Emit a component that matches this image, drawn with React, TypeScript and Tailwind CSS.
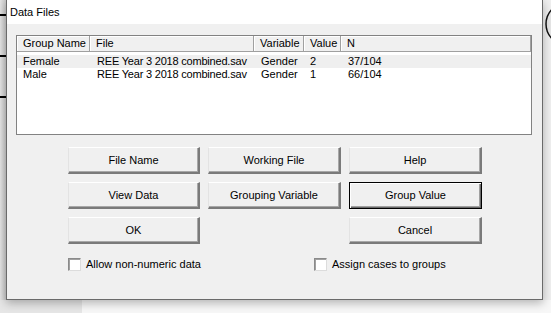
import React from "react";

type Row = { group: string; file: string; variable: string; value: string; n: string; selected?: boolean };

const rows: Row[] = [
  { group: "Female", file: "REE Year 3 2018 combined.sav", variable: "Gender", value: "2", n: "37/104", selected: true },
  { group: "Male", file: "REE Year 3 2018 combined.sav", variable: "Gender", value: "1", n: "66/104" },
];

const columns = [
  { label: "Group Name", width: "w-[73px]" },
  { label: "File", width: "w-[164px]" },
  { label: "Variable", width: "w-[50px]" },
  { label: "Value", width: "w-[37px]" },
  { label: "N", width: "flex-1" },
];

function Button({ label, isDefault = false }: { label: string; isDefault?: boolean }) {
  return (
    <button
      className={
        isDefault
          ? "h-[27px] border border-black bg-[#f0f0f0] text-[11px] text-black shadow-[inset_1px_1px_0_#ffffff,inset_-1px_-1px_0_#696969,inset_-2px_-2px_0_#a0a0a0]"
          : "h-[27px] border-t border-l border-b-2 border-r-2 border-t-white border-l-[#e3e3e3] border-b-[#7a7a7a] border-r-[#7a7a7a] bg-[#f0f0f0] text-[11px] text-black shadow-[inset_-1px_-1px_0_#a8a8a8]"
      }
    >
      {label}
    </button>
  );
}

function Checkbox({ label }: { label: string }) {
  return (
    <label className="flex items-center gap-[5px]">
      <span className="h-[13px] w-[13px] border border-t-[#8a8a8a] border-l-[#8a8a8a] border-b-[#dcdcdc] border-r-[#dcdcdc] bg-white shadow-[inset_1px_1px_0_#a0a0a0]" />
      <span className="text-[11px] text-black">{label}</span>
    </label>
  );
}

export default function App() {
  return (
    <div className="flex h-[313px] w-[551px] flex-col overflow-hidden bg-[#eeeeee] font-['Liberation_Sans',Arial,sans-serif] text-[11px] text-black">
      <div className="flex h-[300px]">
        {/* window behind, left edge */}
        <div className="flex w-[6px] flex-col bg-gradient-to-r from-[#e4e4e4] to-[#c8c8c8]">
          <div className="mt-[14px] h-[2px] bg-black" />
          <div className="mt-[39px] h-[2px] bg-black" />
          <div className="mt-[39px] h-[2px] bg-black" />
        </div>

        <div className="relative z-10 flex w-[537px] flex-col border-x border-b border-[#6a6a6a] shadow-[0_3px_9px_rgba(0,0,0,0.28)]">
          <div className="flex h-[24px] items-center bg-white pl-[3px] text-[11px]">Data Files</div>

          <div className="flex flex-1 flex-col bg-[#f0f0f0] pl-[9px] pt-[11px]">
            <div className="flex h-[100px] w-[516px] flex-col border border-[#828282] bg-white">
              <div className="flex h-[16px]">
                {columns.map((c) => (
                  <div
                    key={c.label}
                    className={`${c.width} flex items-center border-b border-r border-[#a0a0a0] bg-[#f0f0f0] pl-[6px] shadow-[inset_1px_1px_0_#ffffff]`}
                  >
                    {c.label}
                  </div>
                ))}
              </div>
              <div className="mt-[3px] flex flex-col">
                {rows.map((r) => (
                  <div key={r.group} className={`flex h-[13px] items-center ${r.selected ? "bg-[#efefef]" : ""}`}>
                    <span className="w-[73px] pl-[6px]">{r.group}</span>
                    <span className="w-[164px] pl-[7px] tracking-[-0.2px]">{r.file}</span>
                    <span className="w-[50px] pl-[7px]">{r.variable}</span>
                    <span className="w-[37px] pl-[6px]">{r.value}</span>
                    <span className="flex-1 pl-[7px]">{r.n}</span>
                  </div>
                ))}
              </div>
            </div>

            <div className="ml-[52px] mt-[12px] grid grid-cols-[132px_133px_133px] gap-x-[8px] gap-y-[8px]">
              <Button label="File Name" />
              <Button label="Working File" />
              <Button label="Help" />
              <Button label="View Data" />
              <Button label="Grouping Variable" />
              <Button label="Group Value" isDefault />
              <Button label="OK" />
              <div />
              <Button label="Cancel" />
            </div>

            <div className="ml-[52px] mt-[12px] flex">
              <div className="w-[246px]">
                <Checkbox label="Allow non-numeric data" />
              </div>
              <Checkbox label="Assign cases to groups" />
            </div>
          </div>
        </div>

        {/* window behind, right edge */}
        <div className="flex-1 bg-[#efefef]">
          <svg width="8" height="60" viewBox="0 0 8 60">
            <circle cx="24" cy="24" r="21" fill="#e6e6e6" stroke="#111" strokeWidth="1.5" />
          </svg>
        </div>
      </div>

      <div className="flex h-[13px]">
        <div className="w-[82px] bg-[#e6e6e6]" />
        <div className="flex-1 bg-[#f7f7f7]" />
      </div>
    </div>
  );
}
